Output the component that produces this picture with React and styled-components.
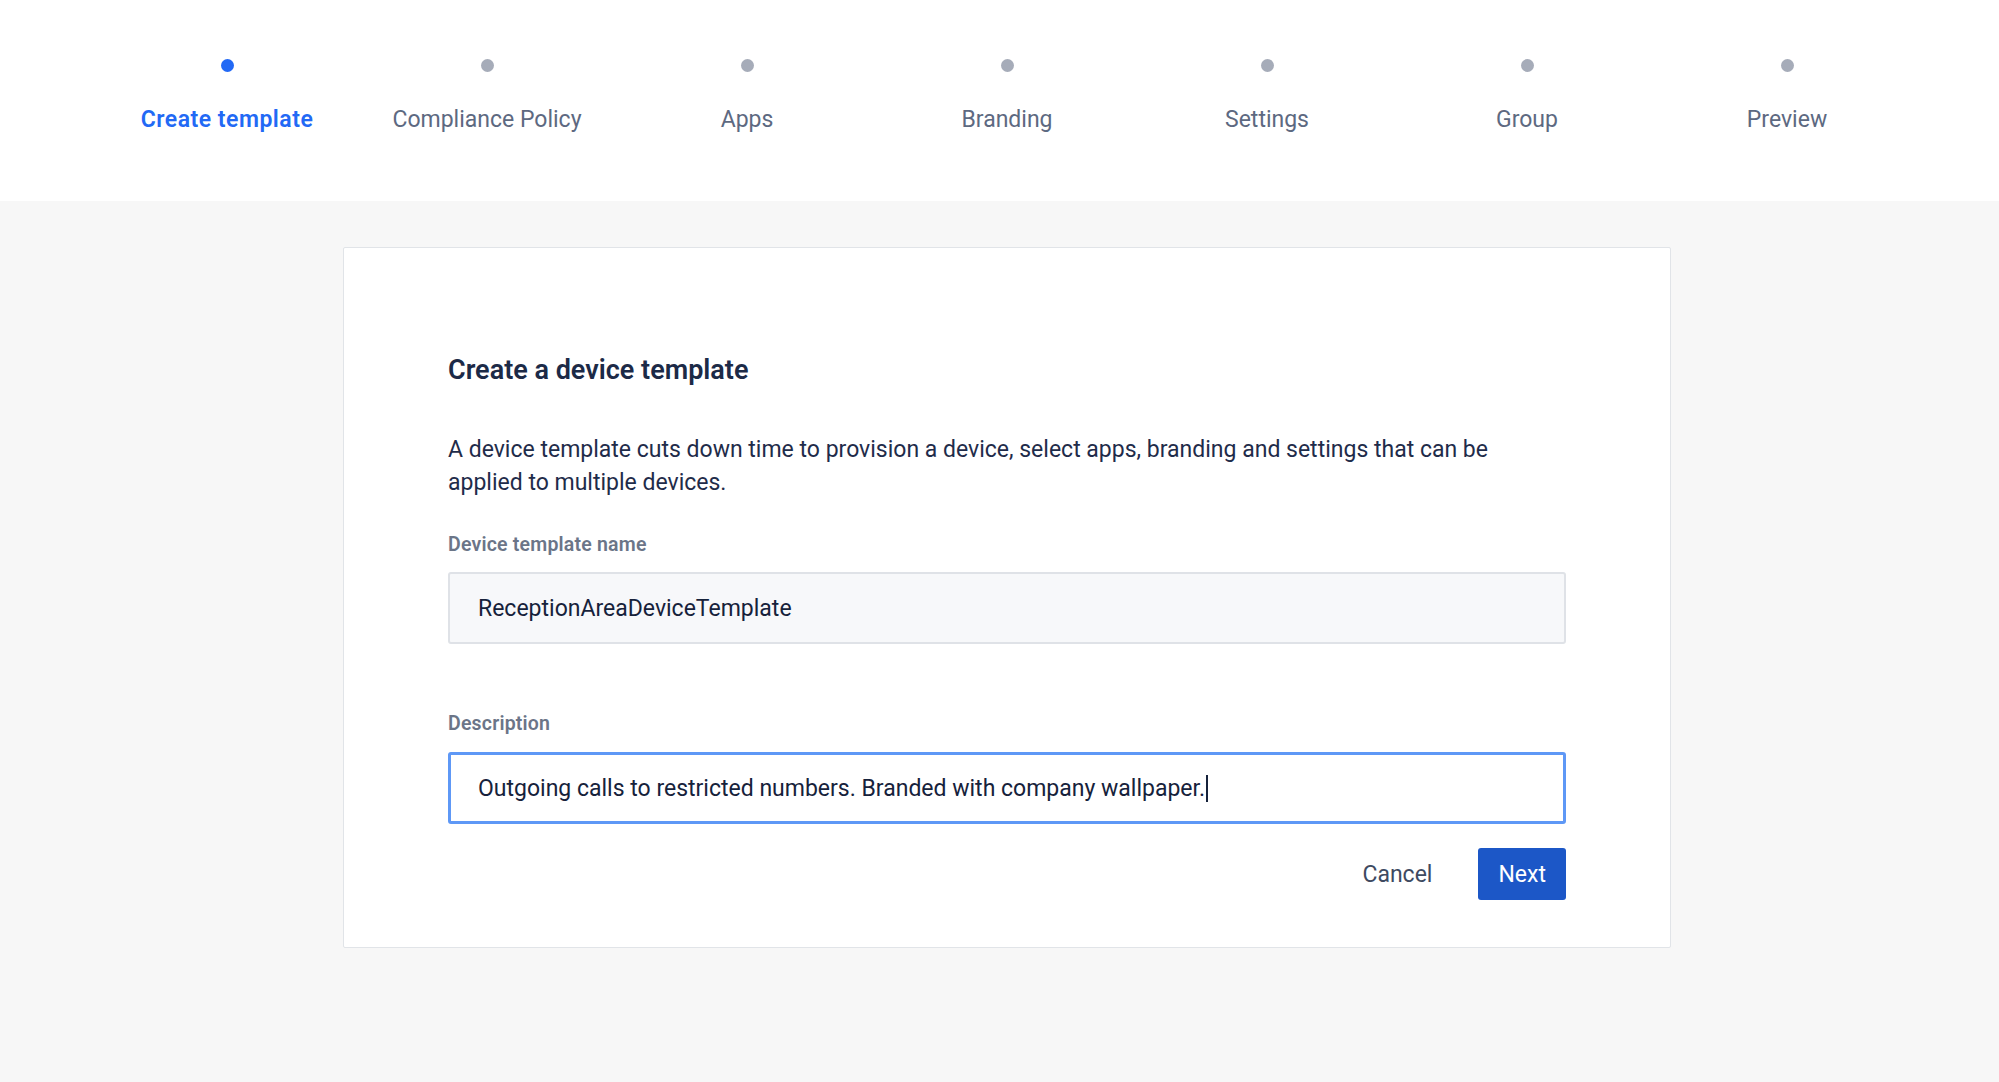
import styled, { createGlobalStyle } from "styled-components";

const GlobalStyle = createGlobalStyle`
  html, body {
    margin: 0;
    padding: 0;
    background: #f7f7f7;
    font-family: Roboto, "Noto Sans", "Liberation Sans", sans-serif;
  }
`;

const STEPS = [
  "Create template",
  "Compliance Policy",
  "Apps",
  "Branding",
  "Settings",
  "Group",
  "Preview",
];

const Header = styled.header`
  background: #ffffff;
  height: 201px;
  display: flex;
  justify-content: center;
  padding-left: 15px;
`;

const StepList = styled.ol`
  list-style: none;
  margin: 0;
  padding: 0;
  display: grid;
  grid-template-columns: repeat(7, 260px);
`;

const Step = styled.li`
  display: flex;
  flex-direction: column;
  align-items: center;
  padding-top: 59px;
`;

const Dot = styled.span`
  width: 13px;
  height: 13px;
  border-radius: 50%;
  background: ${({ $active }) => ($active ? "#2269f5" : "#a6acb9")};
`;

const StepLabel = styled.span`
  margin-top: 33px;
  font-size: 23px;
  line-height: 30px;
  color: ${({ $active }) => ($active ? "#2269f5" : "#5d6981")};
  font-weight: ${({ $active }) => ($active ? 600 : 400)};
  letter-spacing: ${({ $active }) => ($active ? "0.5px" : "0")};
`;

const Main = styled.main`
  display: flex;
  justify-content: center;
  padding: 46px 0 120px 15px;
`;

const Card = styled.section`
  width: 1328px;
  box-sizing: border-box;
  background: #ffffff;
  border: 1px solid #e1e4e8;
  border-radius: 2px;
  padding: 105px 104px 47px;
`;

const Title = styled.h2`
  margin: 0;
  font-size: 27px;
  line-height: 34px;
  font-weight: 600;
  color: #1c2a47;
`;

const Intro = styled.p`
  margin: 46px 0 0;
  font-size: 23px;
  line-height: 33px;
  color: #1f2c4a;
`;

const Label = styled.label`
  display: block;
  margin-top: ${({ $gap }) => $gap}px;
  font-size: 19.5px;
  line-height: 24px;
  font-weight: 600;
  color: #6b7588;
  letter-spacing: 0.2px;
`;

const fieldBase = `
  display: flex;
  align-items: center;
  width: 100%;
  box-sizing: border-box;
  font-family: inherit;
  font-size: 23px;
  color: #16223b;
  border-radius: 3px;
  outline: none;
`;

const TextInput = styled.input`
  ${fieldBase}
  height: 72px;
  margin-top: 15px;
  padding: 0 28px;
  background: #f7f8fa;
  border: 2px solid #dfe2e7;
`;

const FocusedField = styled.div`
  ${fieldBase}
  height: 72px;
  margin-top: 16px;
  padding: 0 27px;
  background: #ffffff;
  border: 3px solid #5e98f6;
  cursor: text;
`;

const Caret = styled.span`
  display: inline-block;
  width: 2px;
  height: 27px;
  margin-left: 1px;
  background: #16223b;
`;

const Actions = styled.div`
  display: flex;
  justify-content: flex-end;
  align-items: center;
  gap: 38px;
  margin-top: 24px;
`;

const GhostButton = styled.button`
  background: none;
  border: none;
  padding: 0 8px;
  height: 51px;
  font-family: inherit;
  font-size: 23px;
  color: #3e4a61;
  cursor: pointer;
`;

const PrimaryButton = styled.button`
  height: 52px;
  padding: 0 20px;
  border: none;
  border-radius: 3px;
  background: #1c57c7;
  color: #ffffff;
  font-family: inherit;
  font-size: 23px;
  cursor: pointer;
`;

const App = () => {
  return (
    <>
      <GlobalStyle />
      <Header>
        <StepList>
          {STEPS.map((step, i) => (
            <Step key={step}>
              <Dot $active={i === 0} />
              <StepLabel $active={i === 0}>{step}</StepLabel>
            </Step>
          ))}
        </StepList>
      </Header>

      <Main>
        <Card>
          <Title>Create a device template</Title>
          <Intro>
            A device template cuts down time to provision a device, select apps,
            branding and settings that can be applied to multiple devices.
          </Intro>

          <Label $gap={34} htmlFor='template-name'>
            Device template name
          </Label>
          <TextInput
            id='template-name'
            defaultValue='ReceptionAreaDeviceTemplate'
            readOnly
          />

          <Label $gap={68}>Description</Label>
          <FocusedField role='textbox'>
            Outgoing calls to restricted numbers. Branded with company
            wallpaper.
            <Caret />
          </FocusedField>

          <Actions>
            <GhostButton>Cancel</GhostButton>
            <PrimaryButton>Next</PrimaryButton>
          </Actions>
        </Card>
      </Main>
    </>
  );
};

export default App;
